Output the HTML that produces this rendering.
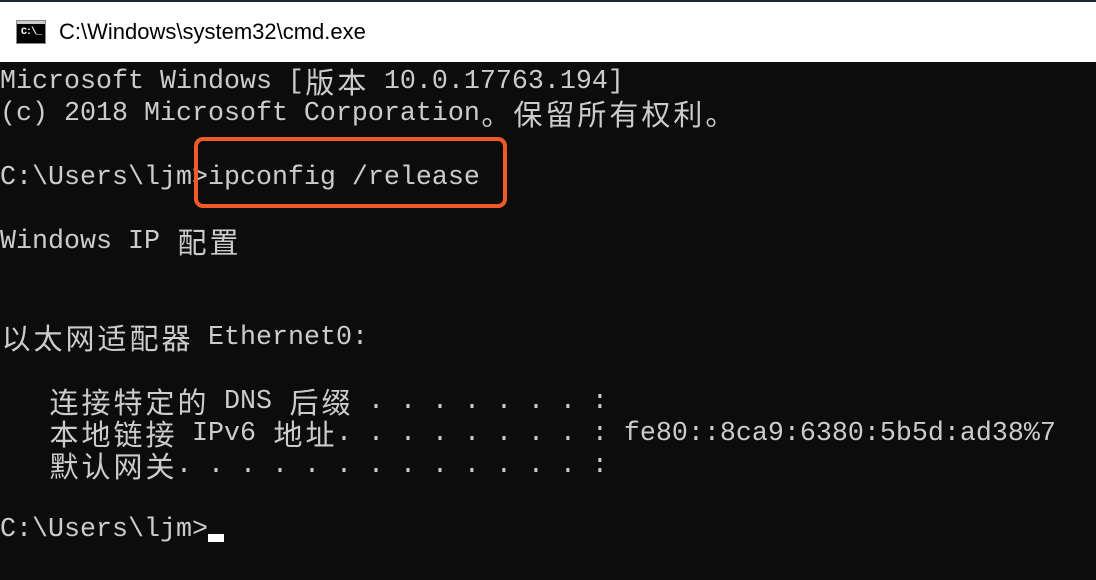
<!DOCTYPE html>
<html><head><meta charset="utf-8"><style>
html,body{margin:0;padding:0;width:1096px;height:580px;overflow:hidden;background:#0c0c0c;}
.title{position:absolute;left:0;top:0;width:1096px;height:62px;background:#fff;border-top:2px solid #1f2630;box-sizing:border-box;}
.title .t{position:absolute;left:59px;top:17px;font:22px "Liberation Sans",sans-serif;color:#000;}
.icon{position:absolute;left:16px;top:18px;width:30px;height:24px;background:#000;border:1px solid #888;box-sizing:border-box;}
.icon:before{content:"";position:absolute;left:0;top:0;right:0;height:3px;background:#ccc;}
.icon span{position:absolute;left:4px;top:6px;font:bold 10px "Liberation Mono",monospace;color:#fff;letter-spacing:-1px;}
.term{position:absolute;left:0;top:66px;color:#cccccc;font-family:"Liberation Mono","Noto Sans CJK SC",monospace;font-size:26.67px;line-height:32px;}
.l{height:32px;white-space:pre;overflow:visible;}
.c{display:inline-block;width:32px;text-align:center;font-family:"Noto Sans CJK SC",sans-serif;font-size:29px;line-height:30px;height:32px;vertical-align:top;}
.box{position:absolute;left:194px;top:137px;width:313px;height:71px;border:4px solid #f05a28;border-radius:9px;box-sizing:border-box;}
.cur{position:absolute;left:208px;top:534px;width:16px;height:8px;background:#fff;}
</style></head><body>
<div class="title"><div class="icon"><span>C:\_</span></div><div class="t">C:\Windows\system32\cmd.exe</div></div>
<div class="term"><div class="l">Microsoft Windows [<span class="c">版</span><span class="c">本</span> 10.0.17763.194]</div><div class="l">(c) 2018 Microsoft Corporation<span class="c">。</span><span class="c">保</span><span class="c">留</span><span class="c">所</span><span class="c">有</span><span class="c">权</span><span class="c">利</span><span class="c">。</span></div><div class="l"></div><div class="l">C:\Users\ljm&gt;ipconfig /release</div><div class="l"></div><div class="l">Windows IP <span class="c">配</span><span class="c">置</span></div><div class="l"></div><div class="l"></div><div class="l"><span class="c">以</span><span class="c">太</span><span class="c">网</span><span class="c">适</span><span class="c">配</span><span class="c">器</span> Ethernet0:</div><div class="l"></div><div class="l">   <span class="c">连</span><span class="c">接</span><span class="c">特</span><span class="c">定</span><span class="c">的</span> DNS <span class="c">后</span><span class="c">缀</span> . . . . . . . :</div><div class="l">   <span class="c">本</span><span class="c">地</span><span class="c">链</span><span class="c">接</span> IPv6 <span class="c">地</span><span class="c">址</span>. . . . . . . . : fe80::8ca9:6380:5b5d:ad38%7</div><div class="l">   <span class="c">默</span><span class="c">认</span><span class="c">网</span><span class="c">关</span>. . . . . . . . . . . . . :</div><div class="l"></div><div class="l">C:\Users\ljm&gt;</div></div>
<div class="box"></div>
<div class="cur"></div>
</body></html>
